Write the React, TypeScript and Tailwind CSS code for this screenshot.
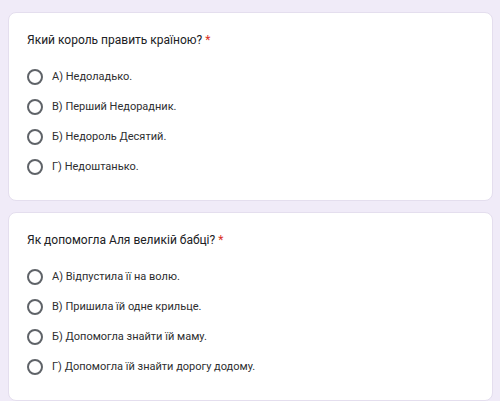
const questions = [
  {
    title: "Який король править країною?",
    options: ["А) Недоладько.", "В) Перший Недорадник.", "Б) Недороль Десятий.", "Г) Недоштанько."],
  },
  {
    title: "Як допомогла Аля великій бабці?",
    options: [
      "А) Відпустила її на волю.",
      "В) Пришила їй одне крильце.",
      "Б) Допомогла знайти їй маму.",
      "Г) Допомогла їй знайти дорогу додому.",
    ],
  },
];

function QuestionCard({ title, options }: { title: string; options: string[] }) {
  return (
    <div className="w-[485px] h-[189px] rounded-lg bg-white border border-[#e4deee] pl-[18px] pt-[17px]">
      <div className="text-[12px] leading-[20px] text-[#202124]">
        {title} <span className="text-[#d93025]">*</span>
      </div>
      <div className="mt-[12px] flex flex-col">
        {options.map((opt) => (
          <label key={opt} className="flex h-[30px] items-center">
            <span className="h-[16px] w-[16px] shrink-0 rounded-full border-2 border-[#5f6368]" />
            <span className="ml-[9px] text-[11px] text-[#2d2e30]">{opt}</span>
          </label>
        ))}
      </div>
    </div>
  );
}

export default function App() {
  return (
    <div
      className="h-[401px] w-[500px] overflow-hidden bg-[#f0ebf8] pl-[8px] pt-[12px] flex flex-col gap-[11px]"
      style={{ fontFamily: "Roboto, 'Liberation Sans', sans-serif" }}
    >
      {questions.map((q) => (
        <QuestionCard key={q.title} title={q.title} options={q.options} />
      ))}
    </div>
  );
}
